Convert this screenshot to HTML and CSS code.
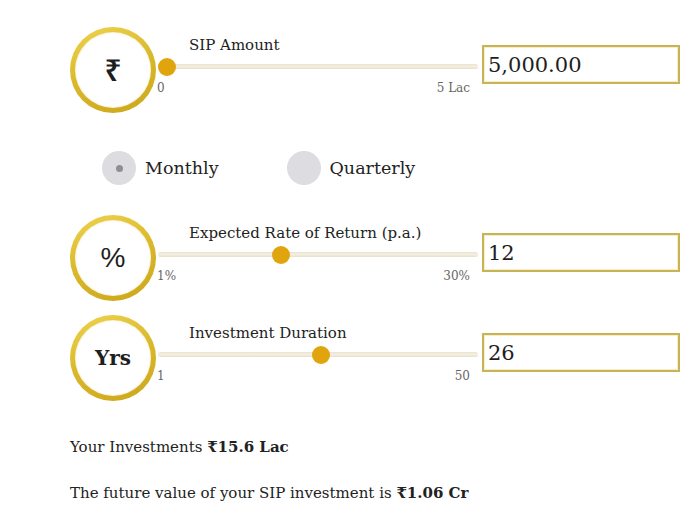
FILE: index.html
```html
<!DOCTYPE html>
<html>
<head>
<meta charset="utf-8">
<link rel="stylesheet" href="styles.css">
</head>
<body>
<div class="calc">
  <div class="row">
    <div class="badge"><span class="sym rupee">₹</span></div>
    <div class="slider">
      <div class="label">SIP Amount</div>
      <div class="track"><span class="thumb" style="--p:0"></span></div>
      <div class="scale"><span>0</span><span>5 Lac</span></div>
    </div>
    <div class="field">5,000.00</div>
  </div>

  <div class="radios">
    <div class="radio"><span class="dot checked"></span><span class="rlabel">Monthly</span></div>
    <div class="radio"><span class="dot"></span><span class="rlabel">Quarterly</span></div>
  </div>

  <div class="row">
    <div class="badge"><span class="sym pct">%</span></div>
    <div class="slider">
      <div class="label">Expected Rate of Return (p.a.)</div>
      <div class="track"><span class="thumb" style="--p:0.379"></span></div>
      <div class="scale"><span>1%</span><span>30%</span></div>
    </div>
    <div class="field">12</div>
  </div>

  <div class="row row3">
    <div class="badge"><span class="sym yrs">Yrs</span></div>
    <div class="slider">
      <div class="label">Investment Duration</div>
      <div class="track"><span class="thumb" style="--p:0.51"></span></div>
      <div class="scale"><span>1</span><span>50</span></div>
    </div>
    <div class="field">26</div>
  </div>

  <p class="result first">Your Investments <b>₹15.6 Lac</b></p>
  <p class="result">The future value of your SIP investment is <b>₹1.06 Cr</b></p>
</div>
</body>
</html>
```
FILE: styles.css
```css
html, body {
  margin: 0;
  background: #fff;
}
body {
  font-family: "DejaVu Serif", "Liberation Serif", serif;
  color: #222;
}
.calc {
  padding: 27px 0 0 70px;
}
.row {
  display: flex;
  height: 86px;
}
.row3 {
  margin-top: 14px;
}
.badge {
  width: 86px;
  height: 86px;
  box-sizing: border-box;
  border-radius: 50%;
  border: 5px solid transparent;
  background:
    linear-gradient(#fff, #fff) padding-box,
    linear-gradient(160deg, #efd34e, #d9b82a 50%, #cda61a) border-box;
  box-shadow: inset 0 0 2px rgba(217, 184, 42, 0.5);
  display: flex;
  align-items: center;
  justify-content: center;
  flex: none;
}
.sym {
  color: #1e1e1e;
}
.rupee {
  font-family: "Noto Sans", "DejaVu Sans", sans-serif;
  font-size: 30px;
  font-weight: 600;
  line-height: 1;
}
.pct {
  font-family: "Liberation Sans", "DejaVu Sans", sans-serif;
  font-size: 28px;
}
.yrs {
  font-family: "DejaVu Serif", serif;
  font-weight: bold;
  font-size: 20px;
}
.slider {
  width: 322px;
  padding-top: 8px;
  box-sizing: border-box;
  flex: none;
}
.label {
  margin-left: 33px;
  font-size: 15px;
  line-height: 20px;
  color: #222;
}
.track {
  position: relative;
  margin: 9px 0 0 2px;
  height: 5px;
  border-radius: 3px;
  background: linear-gradient(#ebe3cf, #f4efe3 50%, #e7dfca);
}
.thumb {
  position: absolute;
  top: -6.5px;
  left: calc(var(--p) * (100% - 18px));
  width: 18px;
  height: 18px;
  border-radius: 50%;
  background: #e0a40c;
}
.scale {
  display: flex;
  justify-content: space-between;
  margin-top: 12px;
  padding: 0 8px 0 1px;
  font-size: 12px;
  line-height: 14px;
  color: #666;
}
.field {
  margin: 18px 0 0 4px;
  width: 198px;
  height: 39px;
  box-sizing: border-box;
  border: 2px solid #c8b457;
  box-shadow: inset 0 0 0 1px #f4eec9;
  padding-left: 4px;
  display: flex;
  align-items: center;
  font-size: 21px;
  color: #1e1e1e;
  flex: none;
}
.radios {
  display: flex;
  align-items: center;
  height: 40px;
  margin: 35px 0 27px 32px;
}
.radio {
  display: flex;
  align-items: center;
}
.radio + .radio {
  margin-left: 68px;
}
.dot {
  width: 34px;
  height: 34px;
  border-radius: 50%;
  background: #dcdce1;
  position: relative;
  flex: none;
}
.dot.checked::after {
  content: "";
  position: absolute;
  left: 14px;
  top: 14px;
  width: 7px;
  height: 7px;
  border-radius: 50%;
  background: #8e8e94;
}
.rlabel {
  margin-left: 9px;
  font-size: 17.5px;
}
.result {
  margin: 26px 0 0;
  font-size: 15px;
  line-height: 20px;
}
.result.first {
  margin-top: 36px;
}
```
